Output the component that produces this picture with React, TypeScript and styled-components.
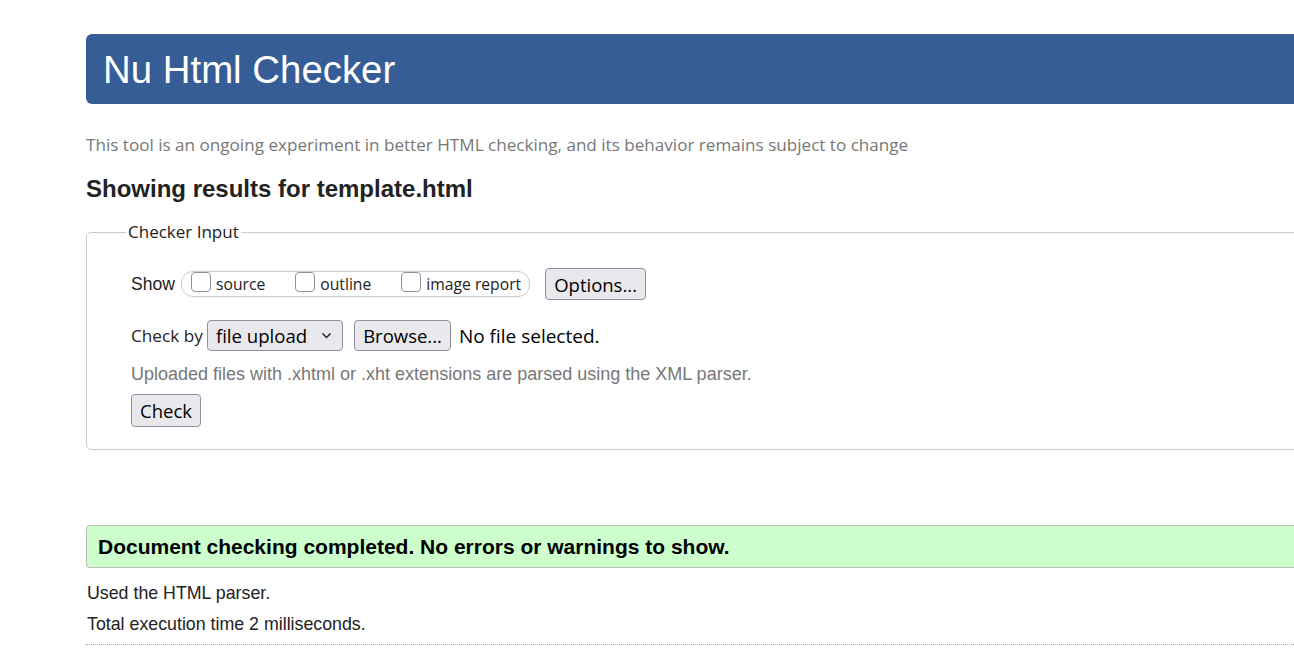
import styled, { createGlobalStyle } from "styled-components";

const GlobalStyle = createGlobalStyle`
  html, body {
    margin:0;
    padding:0;
    background:#fff;
    overflow:hidden;
  }
  body {
    font-family:"Liberation Sans", Arial, sans-serif;
    color:#222;
  }
`;

const ui = `"Open Sans", "Noto Sans", sans-serif`;

const Page = styled.div`
  padding:34px 0 0 86px;
  width:1300px;
`;

const Header = styled.h1`
  margin:0;
  height:70px;
  background:#365d95;
  border-radius:6px 0 0 6px;
  color:#fff;
  font-weight:400;
  font-size:38.4px;
  line-height:72px;
  padding-left:17px;
`;

const Intro = styled.p`
  margin:29px 0 0;
  font-family:${ui};
  font-size:17.1px;
  line-height:24px;
  color:#777;
`;

const Results = styled.h2`
  margin:17px 0 0;
  font-size:24px;
  line-height:30px;
  font-weight:700;
  color:#222;
`;

const Fieldset = styled.fieldset`
  margin:16px 0 0;
  padding:24px 0 22px 44px;
  border:1px solid #ccc;
  border-radius:5px 0 0 5px;
  min-width:0;
`;

const Legend = styled.legend`
  margin-left:-5px;
  padding:0 2px;
  font-family:${ui};
  font-size:17px;
  line-height:24px;
  color:#222;
`;

const Row = styled.div<{ $top?: number }>`
  display:flex;
  align-items:center;
  margin-top:${({ $top }) => $top ?? 0}px;
`;

const Label = styled.span<{ $ui?: boolean }>`
  font-family:${({ $ui }) => ($ui ? ui : `"Liberation Sans", Arial, sans-serif`)};
  font-size:${({ $ui }) => ($ui ? "17.2px" : "17.6px")};
  color:#222;
  margin-right:${({ $ui }) => ($ui ? 4 : 6)}px;
`;

const ToggleGroup = styled.div`
  display:flex;
  align-items:center;
  height:24px;
  border:1px solid #ccc;
  border-radius:12px;
  padding:0 8px 0 9px;
  margin-right:15px;
`;

const Option = styled.label`
  display:flex;
  align-items:center;
  font-family:${ui};
  font-size:15.7px;
  color:#222;
  margin-right:30px;
  &:last-child { margin-right:0; }
`;

const Box = styled.input`
  appearance:none;
  width:20px;
  height:20px;
  margin:-4px 5px 0 0;
  border:1px solid #8f8f9d;
  border-radius:4px;
  background:#fff;
  box-sizing:border-box;
`;

const Button = styled.button`
  height:32px;
  padding:0 8px;
  font-family:${ui};
  font-size:18.5px;
  color:#000;
  background:#e9e9ed;
  border:1px solid #8f8f9d;
  border-radius:4px;
  box-sizing:border-box;
`;

const Select = styled.div`
  display:flex;
  align-items:center;
  height:31px;
  padding:0 10px 0 8px;
  gap:14px;
  font-family:${ui};
  font-size:18.6px;
  color:#000;
  background:#e9e9ed;
  border:1px solid #8f8f9d;
  border-radius:4px;
  box-sizing:border-box;
  margin-right:11px;
`;

const FileButton = styled(Button)`
  height:31px;
  margin-right:8px;
`;

const FileName = styled.span`
  font-family:${ui};
  font-size:19px;
  color:#000;
`;

const Hint = styled.p`
  margin:12px 0 0;
  font-size:18px;
  line-height:22px;
  color:#777;
`;

const CheckButton = styled(Button)`
  display:block;
  height:33px;
  margin-top:9px;
`;

const Success = styled.div`
  margin-top:75px;
  height:43px;
  box-sizing:border-box;
  display:flex;
  align-items:center;
  padding-left:11px;
  background:#ccffcc;
  border:1px solid #bdbdbd;
  border-radius:4px 0 0 4px;
  font-size:21px;
  font-weight:700;
  color:#000;
`;

const Details = styled.div`
  padding-top:14px;
  border-bottom:1px dotted #aaa;
  padding-bottom:9px;
`;

const Detail = styled.p`
  margin:0 0 9px 1px;
  font-size:17.8px;
  line-height:22px;
  color:#222;
  &:last-child { margin-bottom:0; }
`;

const Chevron = () => (
  <svg width="11" height="7" viewBox="0 0 11 7" fill="none">
    <path d="M1.5 1.5 L5.5 5.5 L9.5 1.5" stroke="#222" strokeWidth="1.5" />
  </svg>
);

export default function App() {
  return (
    <>
      <GlobalStyle />
      <Page>
        <Header>Nu Html Checker</Header>
        <Intro>
          This tool is an ongoing experiment in better HTML checking, and its behavior remains subject to change
        </Intro>
        <Results>Showing results for template.html</Results>
        <Fieldset>
          <Legend>Checker Input</Legend>
          <Row>
            <Label>Show</Label>
            <ToggleGroup>
              <Option><Box type="checkbox" />source</Option>
              <Option><Box type="checkbox" />outline</Option>
              <Option><Box type="checkbox" />image report</Option>
            </ToggleGroup>
            <Button>Options...</Button>
          </Row>
          <Row $top={20}>
            <Label $ui>Check by</Label>
            <Select>
              file upload
              <Chevron />
            </Select>
            <FileButton>Browse...</FileButton>
            <FileName>No file selected.</FileName>
          </Row>
          <Hint>Uploaded files with .xhtml or .xht extensions are parsed using the XML parser.</Hint>
          <CheckButton>Check</CheckButton>
        </Fieldset>
        <Success>Document checking completed. No errors or warnings to show.</Success>
        <Details>
          <Detail>Used the HTML parser.</Detail>
          <Detail>Total execution time 2 milliseconds.</Detail>
        </Details>
      </Page>
    </>
  );
}
